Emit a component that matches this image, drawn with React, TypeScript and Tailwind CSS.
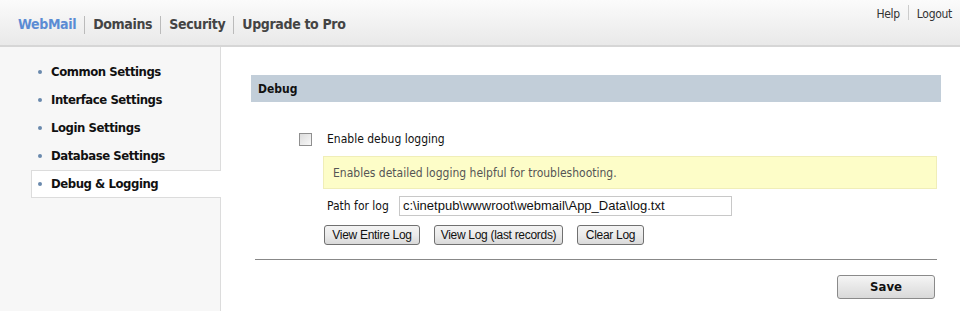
import React from "react";

const menu = [
  "Common Settings",
  "Interface Settings",
  "Login Settings",
  "Database Settings",
  "Debug & Logging",
];

const tahoma = "font-['DejaVu_Sans_Condensed','DejaVu_Sans',sans-serif]";

const SmallButton = ({ w, children }: { w: string; children: React.ReactNode }) => (
  <button
    className={`${w} h-[20px] rounded-[3px] border border-[#707070] bg-gradient-to-b from-[#f3f3f3] via-[#ebebeb] to-[#d9d9d9] text-[12px] text-[#111] font-['Liberation_Sans',sans-serif] tracking-[-0.3px] leading-none`}
  >
    {children}
  </button>
);

export default function App() {
  return (
    <div className={`w-[960px] h-[313px] overflow-hidden bg-white ${tahoma}`}>
      {/* header */}
      <div className="h-[47px] flex justify-between border-b-2 border-[#d6d6d6] bg-gradient-to-b from-[#fbfbfb] to-[#e9e9e9]">
        <div className="flex items-center pl-[18px] pt-[4px] text-[14px] tracking-[-0.35px] font-bold text-[#444]">
          <span className="text-[#5b8cd4]">WebMail</span>
          <span className="mx-[8px] w-px h-[18px] bg-[#bbb]" />
          <span>Domains</span>
          <span className="mx-[8px] w-px h-[18px] bg-[#bbb]" />
          <span>Security</span>
          <span className="mx-[8px] w-px h-[18px] bg-[#bbb]" />
          <span>Upgrade to Pro</span>
        </div>
        <div className="flex items-start pt-[5px] pr-[8px] text-[12px] tracking-[-0.3px] text-[#333]">
          <span>Help</span>
          <span className="mx-[8px] w-px h-[15px] bg-[#ccc]" />
          <span>Logout</span>
        </div>
      </div>

      <div className="flex h-[264px]">
        {/* sidebar */}
        <div className="w-[221px] shrink-0 bg-[#f7f7f7] border-r border-[#dcdcdc] pt-[11px] pl-[31px]">
          {menu.map((m, i) => {
            const active = i === menu.length - 1;
            return (
              <div
                key={m}
                className={
                  active
                    ? "relative -mr-px h-[28px] flex items-center pl-[6px] bg-white border border-r-0 border-[#dcdcdc] text-[13px] tracking-[-0.45px] font-bold text-[#111]"
                    : "h-[28px] flex items-center pl-[7px] text-[13px] tracking-[-0.45px] font-bold text-[#111]"
                }
              >
                <span className="w-[4px] h-[4px] rounded-full bg-[#6a89ad] mr-[9px]" />
                {m}
              </div>
            );
          })}
        </div>

        {/* main */}
        <div className="flex-1 pt-[28px] pl-[30px] pr-[19px]">
          <div className="h-[27px] bg-[#c2ced9] flex items-center pl-[7px] text-[12px] font-bold text-[#111]">
            Debug
          </div>
          <div className="mt-[29px] flex items-center h-[16px] pl-[48px]">
            <span className="w-[13px] h-[13px] border border-[#8f8f8f] bg-gradient-to-br from-[#dcdcdc] to-[#f8f8f8]" />
            <span className="ml-[15px] text-[12px] text-[#111]">Enable debug logging</span>
          </div>
          <div className="ml-[72px] mr-[4px] mt-[9px] h-[33px] flex items-center pl-[9px] bg-[#fdfdc8] border border-[#f0eeb8] text-[12px] text-[#555]">
            Enables detailed logging helpful for troubleshooting.
          </div>
          <div className="ml-[76px] mt-[7px] flex items-center">
            <span className="text-[12px] text-[#111] w-[72px]">Path for log</span>
            <div className="w-[333px] h-[20px] border border-[#c8c8c8] flex items-center pl-[3px] text-[13px] text-[#111] font-['Liberation_Sans',sans-serif]">
              c:\inetpub\wwwroot\webmail\App_Data\log.txt
            </div>
          </div>
          <div className="ml-[73px] mt-[9px] flex gap-[14px]">
            <SmallButton w="w-[96px]">View Entire Log</SmallButton>
            <SmallButton w="w-[129px]">View Log (last records)</SmallButton>
            <SmallButton w="w-[67px]">Clear Log</SmallButton>
          </div>
          <div className="ml-[4px] mr-[4px] mt-[14px] h-px bg-[#888]" />
          <div className="flex justify-end mr-[6px] mt-[15px]">
            <button className="w-[98px] h-[24px] rounded-[3px] border border-[#8a8a8a] bg-gradient-to-b from-[#f5f5f5] to-[#d9d9d9] text-[13px] font-bold text-[#111]">
              Save
            </button>
          </div>
        </div>
      </div>
    </div>
  );
}
